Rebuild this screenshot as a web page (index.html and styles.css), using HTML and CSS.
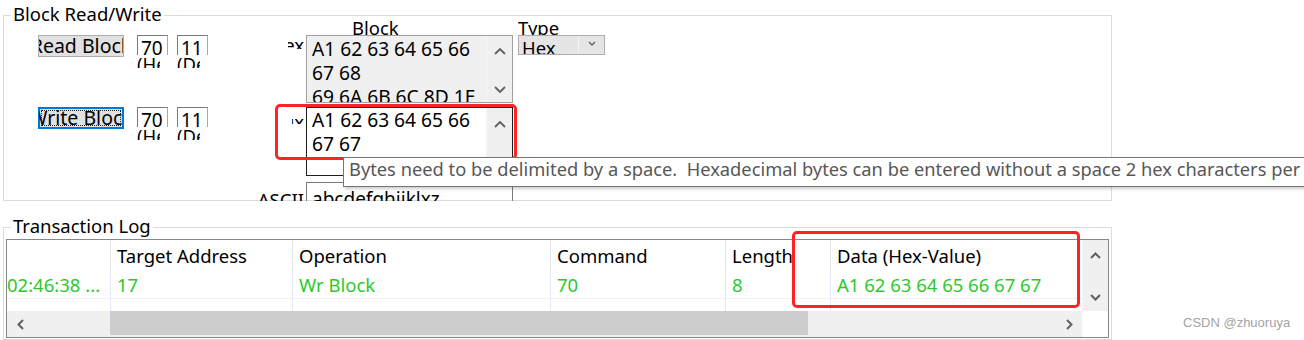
FILE: index.html
```html
<!DOCTYPE html>
<html lang="en">
<head>
    <meta charset="UTF-8">
    <title>Block Read/Write</title>
    <link rel="stylesheet" href="styles.css">
</head>
<body>
    <div class="group group-block">
        <div class="group-title">Block Read/Write</div>
        <div class="block-body">
            <div class="ops">
                <div class="op-row">
                    <div class="btn">Read Block</div>
                    <div class="field">
                        <div class="tb">70</div>
                        <div class="hint">(Hex)</div>
                    </div>
                    <div class="field">
                        <div class="tb">11</div>
                        <div class="hint">(Dec)</div>
                    </div>
                </div>
                <div class="op-row">
                    <div class="btn btn-focus">Write Block</div>
                    <div class="field">
                        <div class="tb">70</div>
                        <div class="hint">(Hex)</div>
                    </div>
                    <div class="field">
                        <div class="tb">11</div>
                        <div class="hint">(Dec)</div>
                    </div>
                </div>
            </div>

            <div class="side-labels">
                <div class="side side-read"><span>Hex</span></div>
                <div class="side side-write"><span>Hix</span></div>
                <div class="side side-ascii"><span>ASCII</span></div>
            </div>

            <div class="data-col">
                <div class="col-label col-block">Block</div>
                <div class="memo memo-read">
                    <div class="memo-text">A1 62 63 64 65 66<br>67 68<br>69 6A 6B 6C 8D 1E</div>
                    <div class="vscroll">
                        <svg width="12" height="7" viewBox="0 0 12 7"><path d="M1 6 L6 1 L11 6" fill="none" stroke="#606060" stroke-width="1.8"/></svg>
                        <svg width="12" height="7" viewBox="0 0 12 7"><path d="M1 1 L6 6 L11 1" fill="none" stroke="#606060" stroke-width="1.8"/></svg>
                    </div>
                </div>
                <div class="memo memo-write">
                    <div class="memo-text">A1 62 63 64 65 66<br>67 67</div>
                    <div class="vscroll">
                        <svg width="12" height="7" viewBox="0 0 12 7"><path d="M1 6 L6 1 L11 6" fill="none" stroke="#606060" stroke-width="1.8"/></svg>
                        <svg width="12" height="7" viewBox="0 0 12 7"><path d="M1 1 L6 6 L11 1" fill="none" stroke="#606060" stroke-width="1.8"/></svg>
                    </div>
                </div>
                <div class="ascii-box">abcdefghijklxz</div>
            </div>

            <div class="type-col">
                <div class="col-label col-type">Type</div>
                <div class="combo">
                    <div class="combo-text">Hex</div>
                    <div class="combo-btn">
                        <svg width="8" height="5" viewBox="0 0 8 5"><path d="M1 1 L4 4 L7 1" fill="none" stroke="#606060" stroke-width="1.3"/></svg>
                    </div>
                </div>
            </div>
        </div>
    </div>

    <div class="group group-log">
        <div class="group-title">Transaction Log</div>
        <div class="list">
            <div class="lv-main">
                <div class="lv-grid lv-head">
                    <div></div>
                    <div>Target Address</div>
                    <div>Operation</div>
                    <div>Command</div>
                    <div>Length</div>
                    <div>Data (Hex-Value)</div>
                </div>
                <div class="lv-grid lv-row">
                    <div class="first">02:46:38 ...</div>
                    <div>17</div>
                    <div>Wr Block</div>
                    <div>70</div>
                    <div>8</div>
                    <div>A1 62 63 64 65 66 67 67</div>
                </div>
                <div class="lv-grid lv-fill">
                    <div></div><div></div><div></div><div></div><div></div><div></div>
                </div>
            </div>
            <div class="lv-vscroll">
                <svg width="11" height="7" viewBox="0 0 11 7"><path d="M1 6 L5.5 1.5 L10 6" fill="none" stroke="#606060" stroke-width="2"/></svg>
                <svg width="11" height="7" viewBox="0 0 11 7"><path d="M1 1 L5.5 5.5 L10 1" fill="none" stroke="#606060" stroke-width="2"/></svg>
            </div>
            <div class="lv-hscroll">
                <div class="hbtn">
                    <svg width="7" height="11" viewBox="0 0 7 11"><path d="M6 1 L1.5 5.5 L6 10" fill="none" stroke="#606060" stroke-width="2"/></svg>
                </div>
                <div class="htrack"><div class="hthumb"></div></div>
                <div class="hbtn">
                    <svg width="7" height="11" viewBox="0 0 7 11"><path d="M1 1 L5.5 5.5 L1 10" fill="none" stroke="#606060" stroke-width="2"/></svg>
                </div>
            </div>
            <div class="lv-corner"></div>
        </div>
    </div>

    <!-- overlays: annotation boxes, tooltip, watermark -->
    <div class="mark mark-write"></div>
    <div class="mark mark-data"></div>
    <div class="tooltip">Bytes need to be delimited by a space.&nbsp; Hexadecimal bytes can be entered without a space 2 hex characters per byte.</div>
    <div class="watermark">CSDN @zhuoruya</div>
</body>
</html>
```

FILE: styles.css
```css
* {
    box-sizing: border-box;
}

body {
    margin: 0;
    width: 1304px;
    height: 340px;
    overflow: hidden;
    position: relative;
    background: #fff;
    font-family: "Noto Sans", sans-serif;
    font-size: 18.5px;
    color: #000;
}

/* group boxes */
.group {
    width: 1109px;
    margin-left: 3px;
    border: 1px solid #dcdcdc;
}

.group-block {
    margin-top: 15px;
    height: 186px;
}

.group-log {
    margin-top: 26px;
    height: 113px;
}

.group-title {
    position: relative;
    width: fit-content;
    margin: -14px 0 -10px 7px;
    padding: 0 2px;
    background: #fff;
    line-height: 24px;
}

.block-body {
    display: flex;
    align-items: flex-start;
    height: 185px;
    margin-top: -1px;
    overflow: hidden;
}

/* read / write buttons */
.ops {
    margin: 19px 0 0 34px;
    width: 170px;
}

.op-row {
    display: flex;
    align-items: flex-start;
    height: 72px;
}

.btn {
    position: relative;
    width: 86px;
    height: 22px;
    border: 1px solid #adadad;
    background: #e1e1e1;
    display: flex;
    justify-content: center;
    align-items: center;
    overflow: hidden;
    white-space: nowrap;
    font-size: 19.5px;
    line-height: 20px;
}

.btn-focus {
    border-color: #0078d7;
    box-shadow: inset 0 0 0 1px #0078d7;
}

.btn-focus::after {
    content: "";
    position: absolute;
    inset: 2px;
    border: 1px dotted #222;
}

.field {
    width: 31px;
    margin-left: 13px;
}

.field + .field {
    margin-left: 9px;
}

.tb {
    height: 20px;
    border: 1px solid #7a7a7a;
    border-bottom: none;
    border-right-color: #a8a8a8;
    padding-left: 3px;
    font-size: 19px;
    line-height: 25px;
    overflow: hidden;
    background: #fff;
}

.hint {
    width: 23px;
    height: 12px;
    margin-top: 1px;
    line-height: 16px;
    overflow: hidden;
    white-space: nowrap;
}

/* clipped labels next to the text boxes */
.side-labels {
    margin-left: 50px;
    width: 48px;
    display: flex;
    flex-direction: column;
    align-items: flex-end;
}

.side {
    display: flex;
    justify-content: flex-end;
    overflow: hidden;
    white-space: nowrap;
    padding-right: 2px;
}

.side-read {
    margin-top: 26px;
    width: 18px;
    height: 7px;
    line-height: 6px;
}

.side-write {
    margin-top: 70px;
    width: 14px;
    height: 5px;
    line-height: 6px;
}

.side-ascii {
    margin-top: 62px;
    width: 48px;
    height: 24px;
    line-height: 24px;
    padding-top: 2px;
}

/* data column */
.data-col {
    width: 207px;
    display: flex;
    flex-direction: column;
}

.col-label {
    height: 19px;
    background: #fff;
    line-height: 24px;
    overflow: hidden;
    white-space: nowrap;
}

.col-block {
    margin-left: 46px;
    width: 61px;
}

.col-type {
    width: 41px;
}

.memo {
    display: flex;
    overflow: hidden;
    font-size: 19.2px;
}

.memo-read {
    height: 68px;
    border: 1px solid #a0a0a0;
    background: #f0f0f0;
}

.memo-write {
    height: 69px;
    margin-top: 4px;
    border: 1px solid #1e1e1e;
    background: #fff;
}

.memo-text {
    flex: 1;
    padding: 1px 0 0 5px;
    line-height: 24px;
    white-space: nowrap;
    overflow: hidden;
}

.memo-write .memo-text {
    padding-top: 0;
}

.vscroll {
    width: 26px;
    background: #f0f0f0;
    border-left: 1px solid #f7f7f7;
    display: flex;
    flex-direction: column;
    justify-content: space-between;
    align-items: center;
    padding: 12px 0 9px;
}

.memo-write .vscroll {
    padding-top: 13px;
}

.ascii-box {
    height: 24px;
    margin-top: 6px;
    border: 1px solid #7a7a7a;
    padding: 4px 0 0 5px;
    font-size: 19px;
    line-height: 24px;
    white-space: nowrap;
    overflow: hidden;
}

/* type combo */
.type-col {
    margin-left: 5px;
    width: 87px;
    display: flex;
    flex-direction: column;
}

.combo {
    height: 20px;
    border: 1px solid #adadad;
    background: #e5e5e5;
    display: flex;
    overflow: hidden;
}

.combo-text {
    flex: 1;
    padding-left: 3px;
    line-height: 24px;
}

.combo-btn {
    width: 26px;
    border-left: 1px solid #f4f4f4;
    display: flex;
    justify-content: center;
    padding-top: 5px;
}

/* transaction list view */
.list {
    width: 1103px;
    height: 99px;
    margin: 11px 0 0 2px;
    border: 1px solid #828790;
    display: grid;
    grid-template-columns: 1fr 26px;
    grid-template-rows: 71px 26px;
}

.lv-main {
    overflow: hidden;
}

.lv-grid {
    display: grid;
    grid-template-columns: 104px 182px 258px 175px 105px 1fr;
}

.lv-grid div {
    padding-left: 6px;
    white-space: nowrap;
    overflow: hidden;
}

.lv-head div {
    height: 32px;
    line-height: 32px;
    border-right: 1px solid #e5e5e5;
}

.lv-row {
    border-bottom: 1px solid #f0f0f0;
    color: #2ec82e;
}

.lv-row div,
.lv-fill div {
    height: 26px;
    line-height: 26px;
    border-right: 1px solid #e3e8f4;
}

.lv-fill div {
    height: 12px;
}

.lv-grid div:last-child {
    border-right: none;
}

.lv-row .first {
    padding-left: 0;
}

.lv-vscroll {
    background: #f0f0f0;
    display: flex;
    flex-direction: column;
    justify-content: space-between;
    align-items: center;
    padding: 12px 0 10px;
}

.lv-hscroll {
    display: flex;
    background: #f0f0f0;
}

.hbtn {
    width: 26px;
    display: flex;
    justify-content: center;
    align-items: center;
}

.htrack {
    flex: 1;
}

.hthumb {
    width: 698px;
    height: 24px;
    margin-left: 77px;
    background: #cdcdcd;
}

.lv-corner {
    background: #fff;
}

/* overlays */
.mark {
    position: absolute;
    border: 3px solid #ff2424;
    border-radius: 5px;
}

.mark-write {
    left: 275px;
    top: 104px;
    width: 242px;
    height: 56px;
}

.mark-data {
    left: 792px;
    top: 231px;
    width: 288px;
    height: 77px;
}

.tooltip {
    position: absolute;
    left: 343px;
    top: 157px;
    width: 1100px;
    height: 30px;
    padding-left: 5px;
    border: 1px solid #767676;
    background: #fff;
    color: #575757;
    font-size: 18.3px;
    line-height: 22px;
    white-space: nowrap;
    box-shadow: 2px 2px 3px rgba(0, 0, 0, 0.2);
}

.watermark {
    position: absolute;
    left: 1183px;
    top: 315px;
    font-family: "Liberation Sans", Arial, sans-serif;
    font-size: 13px;
    line-height: 15px;
    color: #a3a3a3;
}
```
